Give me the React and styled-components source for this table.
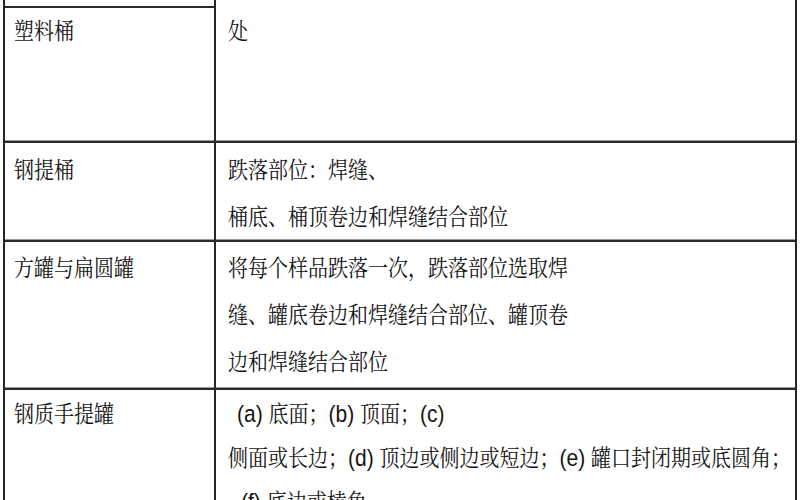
import React from "react";
import styled, { createGlobalStyle } from "styled-components";

const Global = createGlobalStyle`
  html, body { margin: 0; padding: 0; background: #ffffff; }
  body {
    width: 800px;
    height: 500px;
    overflow: hidden;
    font-family: "Liberation Sans", "Noto Serif CJK SC", "Noto Sans CJK SC", sans-serif;
    color: #141414;
  }
`;

const Page = styled.div`
  padding-left: 3px;
  width: 797px;
`;

const Table = styled.div`
  width: 790px;
  border-left: 2px solid #262626;
  border-right: 2px solid #262626;
`;

const Row = styled.div`
  display: grid;
  grid-template-columns: 209px 1fr;
  height: ${(p) => p.$h}px;
  border-top: ${(p) => (p.$top ? "2px solid #2a2a2a" : "none")};
  box-shadow: ${(p) => (p.$top ? "0 -1px 0 #9a9a9a" : "none")};
`;

const LeftCell = styled.div`
  display: flex;
  flex-direction: column;
  padding-top: ${(p) => p.$pad || 0}px;
  padding-left: 9px;
`;

const Sliver = styled.div`
  height: 6px;
  margin-left: -9px;
  border-bottom: 2px solid #2a2a2a;
`;

const RightCell = styled.div`
  border-left: 2px solid #262626;
  padding-top: ${(p) => p.$pad || 0}px;
  padding-left: 12px;
  overflow: hidden;
`;

const Text = styled.div`
  font-size: 20px;
  line-height: ${(p) => p.$lh}px;
  white-space: nowrap;
  padding-left: ${(p) => p.$indent || 0}px;
  transform: scaleY(1.14);
  transform-origin: center;
`;

const Latin = styled.span`
  font-family: "Liberation Sans", sans-serif;
  font-size: 21px;
`;

export default function App() {
  return (
    <>
      <Global />
      <Page>
        <Table>
          <Row $h={141}>
            <LeftCell>
              <Sliver />
              <Text $lh={47}>塑料桶</Text>
            </LeftCell>
            <RightCell $pad={8}>
              <Text $lh={47}>处</Text>
            </RightCell>
          </Row>
          <Row $h={97} $top>
            <LeftCell $pad={4}>
              <Text $lh={47}>钢提桶</Text>
            </LeftCell>
            <RightCell $pad={4}>
              <Text $lh={47}>跌落部位：焊缝、</Text>
              <Text $lh={47}>桶底、桶顶卷边和焊缝结合部位</Text>
            </RightCell>
          </Row>
          <Row $h={146} $top>
            <LeftCell $pad={3}>
              <Text $lh={47}>方罐与扁圆罐</Text>
            </LeftCell>
            <RightCell $pad={3}>
              <Text $lh={47}>将每个样品跌落一次，跌落部位选取焊</Text>
              <Text $lh={47}>缝、罐底卷边和焊缝结合部位、罐顶卷</Text>
              <Text $lh={47}>边和焊缝结合部位</Text>
            </RightCell>
          </Row>
          <Row $h={140} $top>
            <LeftCell $pad={2}>
              <Text $lh={44}>钢质手提罐</Text>
            </LeftCell>
            <RightCell $pad={2}>
              <Text $lh={44} $indent={9}>
                <Latin>(a) </Latin>底面；<Latin>(b) </Latin>顶面；<Latin>(c)</Latin>
              </Text>
              <Text $lh={44}>
                侧面或长边；<Latin>(d) </Latin>顶边或侧边或短边；<Latin>(e) </Latin>罐口封闭期或底圆角；
              </Text>
              <Text $lh={44} $indent={13}>
                <Latin>(f) </Latin>底边或棱角
              </Text>
            </RightCell>
          </Row>
        </Table>
      </Page>
    </>
  );
}
